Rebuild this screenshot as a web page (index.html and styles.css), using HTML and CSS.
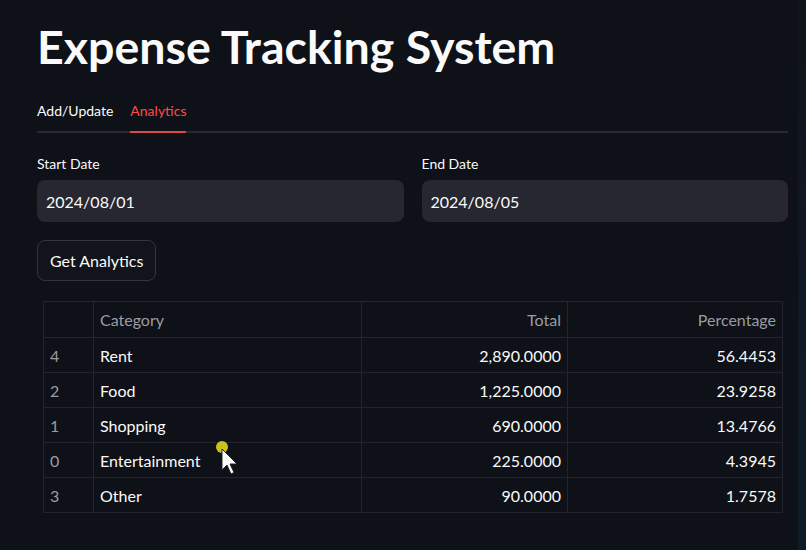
FILE: index.html
```html
<!DOCTYPE html>
<html>
<head>
<meta charset="utf-8">
<link rel="stylesheet" href="styles.css">
</head>
<body>
<div class="edge"></div>
<main class="app">
  <h1 class="title">Expense Tracking System</h1>
  <div class="tabs">
    <div class="tab">Add/Update</div>
    <div class="tab active">Analytics</div>
  </div>
  <div class="dates">
    <div class="field">
      <label class="label">Start Date</label>
      <div class="input">2024/08/01</div>
    </div>
    <div class="field">
      <label class="label">End Date</label>
      <div class="input">2024/08/05</div>
    </div>
  </div>
  <button class="btn">Get Analytics</button>
  <div class="table">
    <div class="row head">
      <div class="c idx"></div>
      <div class="c cat">Category</div>
      <div class="c num tot">Total</div>
      <div class="c num pct">Percentage</div>
    </div>
    <div class="row">
      <div class="c idx">4</div><div class="c cat">Rent</div><div class="c num tot">2,890.0000</div><div class="c num pct">56.4453</div>
    </div>
    <div class="row">
      <div class="c idx">2</div><div class="c cat">Food</div><div class="c num tot">1,225.0000</div><div class="c num pct">23.9258</div>
    </div>
    <div class="row">
      <div class="c idx">1</div><div class="c cat">Shopping</div><div class="c num tot">690.0000</div><div class="c num pct">13.4766</div>
    </div>
    <div class="row">
      <div class="c idx">0</div><div class="c cat">Entertainment</div><div class="c num tot">225.0000</div><div class="c num pct">4.3945</div>
    </div>
    <div class="row last">
      <div class="c idx">3</div><div class="c cat">Other</div><div class="c num tot">90.0000</div><div class="c num pct">1.7578</div>
    </div>
  </div>
</main>
<svg class="cursor" width="30" height="40" viewBox="0 0 30 40">
  <circle cx="7" cy="7" r="6" fill="#c9c21c"/>
  <path d="M7 9 L7 30 L12 25 L16 34 L19 32.5 L15 24 L22 24 Z" fill="#ffffff" stroke="#222" stroke-width="1"/>
</svg>
</body>
</html>
```
FILE: styles.css
```css
html, body {
  margin: 0;
  padding: 0;
  background: #0e1117;
  height: 100%;
  overflow: hidden;
}
body {
  font-family: Lato, "Noto Sans", sans-serif;
  color: #fafafa;
  position: relative;
}
.edge {
  position: absolute;
  top: 0;
  right: 0;
  width: 8px;
  height: 100%;
  background: linear-gradient(180deg, #10141c 0%, #0f1a24 60%, #0f1c26 100%);
}
.app {
  width: 751px;
  padding: 21px 0 0 37px;
}
.title {
  margin: 0;
  font-size: 46.5px;
  font-weight: 700;
  line-height: 50px;
  letter-spacing: 0;
}
.tabs {
  display: flex;
  gap: 17px;
  margin-top: 29px;
  border-bottom: 2px solid #262a33;
}
.tab {
  font-size: 14px;
  line-height: 20px;
  padding: 1px 0 10px;
  margin-bottom: -2px;
  border-bottom: 2px solid transparent;
}
.tab.active {
  color: #ff4b4b;
  border-bottom-color: #e0474c;
}
.dates {
  display: flex;
  gap: 18px;
  margin-top: 21px;
}
.field {
  flex: 1;
  display: flex;
  flex-direction: column;
}
.label {
  font-size: 14px;
  line-height: 20px;
  margin-bottom: 6px;
}
.input {
  height: 42px;
  background: #262730;
  border-radius: 8px;
  padding: 0 9px;
  display: flex;
  align-items: center;
  font-size: 16px;
}
.btn {
  display: block;
  margin-top: 18px;
  height: 41px;
  padding: 0 12px;
  background: #11141b;
  color: #fafafa;
  border: 1px solid #34363f;
  border-radius: 8px;
  font-family: Lato, "Noto Sans", sans-serif;
  font-size: 16px;
}
.table {
  margin: 20px 0 0 6px;
  width: 738px;
  border: 1px solid #22252d;
}
.row {
  display: grid;
  grid-template-columns: 50px 268px 206px 1fr;
  height: 34px;
  border-bottom: 1px solid #22252d;
  font-size: 16px;
}
.row.head {
  height: 35px;
  color: #9a9ca2;
}
.row.last {
  border-bottom: none;
}
.c {
  display: flex;
  align-items: center;
  padding: 0 6px;
  border-right: 1px solid #22252d;
}
.c.pct {
  border-right: none;
}
.c.idx {
  color: #9a9ca2;
}
.c.num {
  justify-content: flex-end;
}
.cursor {
  position: absolute;
  left: 215px;
  top: 440px;
}
```
